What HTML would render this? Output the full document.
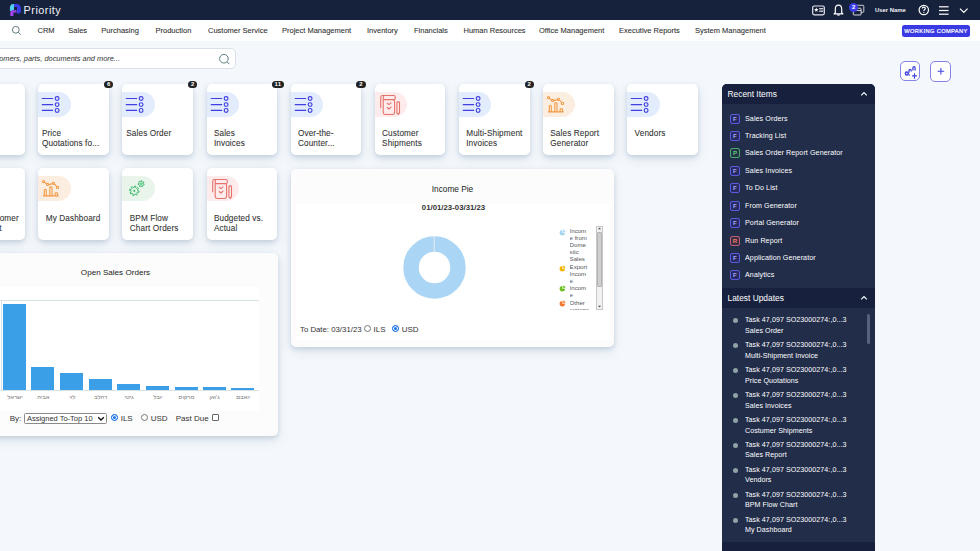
<!DOCTYPE html>
<html><head><meta charset="utf-8">
<style>
*{box-sizing:border-box;margin:0;padding:0}
html,body{width:980px;height:551px;overflow:hidden}
body{position:relative;background:#f4f8fc;font-family:"Liberation Sans",sans-serif;color:#333}
.abs{position:absolute}
#hdr{left:0;top:0;width:980px;height:20px;background:#16213c}
#nav{left:0;top:20px;width:980px;height:21px;background:#fff}
.nv{position:absolute;top:26px;font-size:7.5px;color:#303030;-webkit-text-stroke:0.08px #303030;white-space:nowrap;line-height:10px}
#search{left:-60px;top:48px;width:295.5px;height:20.5px;background:#fff;border:1px solid #d9e0e7;border-radius:5px}
.tile{position:absolute;width:70.8px;height:71px;background:#fff;border-radius:5px;box-shadow:0 2px 5px rgba(60,90,130,.2),0 5px 12px rgba(60,90,130,.1)}
.pill{position:absolute;left:0;top:8px;width:32.5px;height:25px;border-radius:0 12.5px 12.5px 0}
.pb{background:#e2ecfc}.po{background:#fcede1}.pr{background:#fdeceb}.pg{background:#e9f5eb}
.tt{position:absolute;left:7.4px;top:45.3px;font-size:8.2px;line-height:10px;color:#333;-webkit-text-stroke:0.08px #333;letter-spacing:0.12px;white-space:nowrap}
.badge{position:absolute;top:-2.6px;left:65.8px;min-width:9.2px;height:6.9px;border-radius:3.5px;background:#222;color:#fff;font-size:6px;font-weight:bold;line-height:7px;text-align:center;padding:0}
.card{position:absolute;background:#fcfcfc;border-radius:5px;box-shadow:0 2px 5px rgba(60,90,130,.2),0 5px 12px rgba(60,90,130,.1)}
#panel{left:722px;top:84px;width:153px;height:470px;background:#222d4a;border-radius:5px 5px 0 0;overflow:hidden}
.ph{position:absolute;left:0;width:153px;height:20px;background:#17213e;color:#fff;font-size:8.4px;line-height:20.8px;padding-left:5.5px}
.ri{position:absolute;left:8px;height:10px;font-size:7.1px;color:#fff;white-space:nowrap;letter-spacing:0.1px}
.ri i{position:absolute;left:0;top:0;width:10px;height:10px;border:0.9px solid #5b5be2;border-radius:2px;background:#262a5e;font-style:normal;font-weight:bold;font-size:6px;line-height:8.4px;text-align:center;color:#a8a8ff}
.ri span{position:absolute;left:15px;top:0;line-height:10px}
.lu{position:absolute;left:10px;font-size:7.1px;color:#fff;white-space:nowrap;line-height:10.5px;letter-spacing:0.06px}
.lu:before{content:"";position:absolute;left:0.5px;top:3.2px;width:5px;height:5px;border-radius:50%;background:#8ea3a6}
.lu span{position:absolute;left:13px;top:0}
.ri i.ip{border-color:#4aa86a;background:#24364a;color:#5cc872}
.ri i.ir{border-color:#b9606e;background:#3a2e48;color:#f07a5c}
.hb{font-size:5.8px;color:#777;text-align:center;line-height:8px;white-space:nowrap}
.ft{font-size:8px;color:#333;line-height:9px;white-space:nowrap}
.rad{width:7px;height:7px;border:1px solid #767676;border-radius:50%;background:#fff}
.rad.on{border:1.6px solid #1a73e8;background:#1a73e8;box-shadow:inset 0 0 0 1px #fff}
.lg{font-size:6.1px;line-height:7.2px;color:#555;white-space:nowrap}
.btn{position:absolute;top:61px;width:20.5px;height:20.5px;border:1px solid #8383ea;border-radius:5px;background:#fff}
</style></head><body>

<div id="hdr" class="abs">
  <svg class="abs" style="left:0;top:0" width="24" height="20" viewBox="0 0 24 20">
    <path d="M14 4H13.2C11.2 4 9.9 5.6 9.9 7.6V11.3L14 10Z" fill="#4fcdf2"/>
    <path d="M14.1 3.9H16.8C19.1 3.9 20.8 5.7 20.8 8V11.6C20.8 12.7 20 13.6 18.9 13.6H17V7H14.1Z" fill="#3b3bf2"/>
    <path d="M10.3 16V12.9C10.3 11.4 11.5 10.3 13 10.3H16.6V12.6H13.4V16Z" fill="#a544f4"/>
  </svg>
  <div class="abs" style="left:23.6px;top:3.2px;font-size:10.8px;color:#f4f4f8;line-height:14px;letter-spacing:0.5px">Priority</div>

  <!-- contact card icon -->
  <svg class="abs" style="left:812px;top:5px" width="13" height="11" viewBox="0 0 13 11">
    <rect x="0.7" y="1" width="11.6" height="8.8" rx="1.5" fill="none" stroke="#e8e8ee" stroke-width="1.2"/>
    <path d="M4.30 2.60 L4.89 4.09 L6.49 4.19 L5.25 5.21 L5.65 6.76 L4.30 5.90 L2.95 6.76 L3.35 5.21 L2.11 4.19 L3.71 4.09Z" fill="#fff"/><rect x="7.2" y="3.2" width="4" height="1.1" fill="#fff"/><rect x="7.2" y="5.6" width="4" height="1.1" fill="#fff"/>
  </svg>
  <!-- bell -->
  <svg class="abs" style="left:833px;top:4px" width="11" height="12" viewBox="0 0 11 12">
    <path d="M2.3 8.8 L2.3 5.2 Q2.3 1.2 5.5 1.2 Q8.7 1.2 8.7 5.2 L8.7 8.8 L9.9 9.9 L1.1 9.9 Z" fill="none" stroke="#fff" stroke-width="1.2" stroke-linejoin="round"/>
    <path d="M4.3 10.6 Q5.5 11.8 6.7 10.6" fill="none" stroke="#fff" stroke-width="1.1"/>
  </svg>
  <!-- windows -->
  <svg class="abs" style="left:852px;top:4px" width="13" height="12" viewBox="0 0 13 12">
    <rect x="4" y="1.3" width="7.8" height="7" rx="0.8" fill="none" stroke="#ddd" stroke-width="0.9"/>
    <rect x="1.3" y="4.2" width="7.8" height="6.8" rx="0.8" fill="#16213c" stroke="#eee" stroke-width="0.9"/>
    <rect x="1.3" y="6" width="7.8" height="0.8" fill="#eee"/>
  </svg>
  <div class="abs" style="left:849.2px;top:3.3px;width:9px;height:9px;border-radius:50%;background:#3b3be6;color:#fff;font-size:6px;font-weight:bold;line-height:9px;text-align:center">2</div>
  <div class="abs" style="left:875px;top:6px;font-size:5.9px;font-weight:bold;color:#f2f2f6;line-height:8px">User Name</div>
  <!-- help -->
  <svg class="abs" style="left:918px;top:4px" width="12" height="12" viewBox="0 0 12 12">
    <circle cx="5.8" cy="6" r="4.7" fill="none" stroke="#fff" stroke-width="1.2"/>
    <path d="M4.3 4.6 Q4.3 3.1 5.8 3.1 Q7.3 3.1 7.3 4.5 Q7.3 5.4 6.3 5.9 Q5.8 6.2 5.8 7.1" fill="none" stroke="#fff" stroke-width="1.2"/>
    <circle cx="5.8" cy="8.4" r="0.6" fill="#fff"/>
  </svg>
  <!-- hamburger -->
  <svg class="abs" style="left:938px;top:5px" width="12" height="11" viewBox="0 0 12 11">
    <rect x="1" y="1.2" width="9.6" height="1.2" fill="#fff"/><rect x="1" y="4.9" width="9.6" height="1.2" fill="#fff"/><rect x="1" y="8.6" width="9.6" height="1.2" fill="#fff"/>
  </svg>
  <!-- chevron -->
  <svg class="abs" style="left:958px;top:6px" width="11" height="9" viewBox="0 0 11 9">
    <path d="M2 2.6 L5.8 6.4 L9.6 2.6" fill="none" stroke="#fff" stroke-width="1.2"/>
  </svg>
</div>

<div id="nav" class="abs">
  <svg class="abs" style="left:11px;top:5px" width="11" height="11" viewBox="0 0 11 11">
    <circle cx="4.8" cy="4.8" r="3.4" fill="none" stroke="#5f7b80" stroke-width="1"/>
    <path d="M7.3 7.3 L9.6 9.6" stroke="#5f7b80" stroke-width="1"/>
  </svg>
</div>
<div class="nv" style="left:37.5px">CRM</div>
<div class="nv" style="left:68.3px">Sales</div>
<div class="nv" style="left:101.3px">Purchasing</div>
<div class="nv" style="left:155.5px">Production</div>
<div class="nv" style="left:208px">Customer Service</div>
<div class="nv" style="left:282px">Project Management</div>
<div class="nv" style="left:367px">Inventory</div>
<div class="nv" style="left:414px">Financials</div>
<div class="nv" style="left:463.5px">Human Resources</div>
<div class="nv" style="left:539px">Office Management</div>
<div class="nv" style="left:619px">Executive Reports</div>
<div class="nv" style="left:695px">System Management</div>
<div class="abs" style="left:902px;top:24.5px;width:68px;height:12.3px;background:#3535df;border-radius:2.5px;color:#fff;font-size:5.7px;font-weight:normal;-webkit-text-stroke:0.22px #fff;line-height:12.3px;text-align:center;letter-spacing:0.38px;background:#3a3ae4">WORKING COMPANY</div>

<!-- search -->
<div id="search" class="abs"></div>
<div class="abs" style="left:-2px;top:54px;width:122px;text-align:right;font-size:7.4px;font-style:italic;color:#333;line-height:10px;white-space:nowrap;overflow:visible;display:flex;justify-content:flex-end">omers, parts, documents and more...</div>
<svg class="abs" style="left:218px;top:53px" width="13" height="13" viewBox="0 0 13 13">
  <circle cx="5.9" cy="5.7" r="4.3" fill="none" stroke="#5f7b80" stroke-width="1"/>
  <path d="M9 8.8 L11.4 11.2" stroke="#5f7b80" stroke-width="1"/>
</svg>

<!-- action buttons -->
<div class="btn" style="left:900.3px;width:19.5px;height:20px">
  <svg class="abs" style="left:0;top:0" width="19" height="19" viewBox="0 0 19 19">
    <circle cx="5.8" cy="11.5" r="1.45" fill="none" stroke="#4343df" stroke-width="1.5"/>
    <circle cx="8.4" cy="13.1" r="0.75" fill="#4343df"/>
    <path d="M8 10.8V8.6Q8 7.3 9.1 7.3Q10.2 7.3 10.2 8.6V9.6M11.9 8.4V6Q11.9 4.7 13 4.7Q14.1 4.7 14.1 6V8.4" fill="none" stroke="#4343df" stroke-width="1.3"/>
    <path d="M11 13.9H16M13.5 11.2V16.7" stroke="#4343df" stroke-width="1.15"/>
  </svg>
</div>
<div class="btn" style="left:930.3px">
  <svg class="abs" style="left:0;top:0" width="19" height="19" viewBox="0 0 19 19">
    <path d="M6.6 9.3 L13.2 9.3 M9.9 6 L9.9 12.6" stroke="#4343df" stroke-width="1.1"/>
  </svg>
</div>

<!-- TILES ROW 1 -->
<div class="tile" style="left:-45.8px;top:84px"></div>

<div class="tile" style="left:38.3px;top:84px"><div class="pill pb"></div>
  <svg class="abs" style="left:0;top:0" width="34" height="34" viewBox="0 0 34 34"><g fill="none" stroke="#3f3fe2" stroke-width="1.15"><path d="M3.8 14.5H15.1M3.8 20.6H15.1M3.8 26.4H15.1"/><circle cx="19.1" cy="14.5" r="1.9"/><circle cx="19.1" cy="20.6" r="1.9"/><circle cx="19.1" cy="26.4" r="1.9"/></g></svg>
  <div class="tt" style="left:3.6px">Price<br>Quotations fo...</div><div class="badge">6</div></div>

<div class="tile" style="left:122.4px;top:84px"><div class="pill pb"></div>
  <svg class="abs" style="left:0;top:0" width="34" height="34" viewBox="0 0 34 34"><g fill="none" stroke="#3f3fe2" stroke-width="1.15"><path d="M3.8 14.5H15.1M3.8 20.6H15.1M3.8 26.4H15.1"/><circle cx="19.1" cy="14.5" r="1.9"/><circle cx="19.1" cy="20.6" r="1.9"/><circle cx="19.1" cy="26.4" r="1.9"/></g></svg>
  <div class="tt" style="left:3.9px">Sales Order</div><div class="badge">2</div></div>

<div class="tile" style="left:206.5px;top:84px"><div class="pill pb"></div>
  <svg class="abs" style="left:0;top:0" width="34" height="34" viewBox="0 0 34 34"><g fill="none" stroke="#3f3fe2" stroke-width="1.15"><path d="M3.8 14.5H15.1M3.8 20.6H15.1M3.8 26.4H15.1"/><circle cx="19.1" cy="14.5" r="1.9"/><circle cx="19.1" cy="20.6" r="1.9"/><circle cx="19.1" cy="26.4" r="1.9"/></g></svg>
  <div class="tt">Sales<br>Invoices</div><div class="badge" style="width:11.3px;letter-spacing:0.3px">11</div></div>

<div class="tile" style="left:290.6px;top:84px"><div class="pill pb"></div>
  <svg class="abs" style="left:0;top:0" width="34" height="34" viewBox="0 0 34 34"><g fill="none" stroke="#3f3fe2" stroke-width="1.15"><path d="M3.8 14.5H15.1M3.8 20.6H15.1M3.8 26.4H15.1"/><circle cx="19.1" cy="14.5" r="1.9"/><circle cx="19.1" cy="20.6" r="1.9"/><circle cx="19.1" cy="26.4" r="1.9"/></g></svg>
  <div class="tt">Over-the-<br>Counter...</div><div class="badge">2</div></div>

<div class="tile" style="left:374.7px;top:84px"><div class="pill pr"></div>
  <svg class="abs" style="left:0;top:0" width="34" height="34" viewBox="0 0 34 34"><g fill="none" stroke="#e5716b" stroke-width="1.1" stroke-linecap="round" stroke-linejoin="round"><path d="M5.7 23.8V13.4Q5.7 11.5 7.6 11.5H18.6Q20.4 11.5 20.4 13.4Q20.4 15.4 18.8 15.6"/><path d="M8.2 15.6H17.8Q19.6 15.6 19.6 17.4V28.6Q19.6 30.5 17.7 30.5H10.1Q8.2 30.5 8.2 28.6V13.4Q8.2 11.5 9.8 11.5"/><path d="M12.2 19.2L13.9 20.7L16 18.8M12.2 23.5L13.9 25L16 23.1"/><path d="M21.9 18.7Q21.9 17.9 23.2 17.9Q24.5 17.9 24.5 18.7V28.8L23.2 30.3L21.9 28.8Z"/></g></svg>
  <div class="tt">Customer<br>Shipments</div></div>

<div class="tile" style="left:458.8px;top:84px"><div class="pill pb"></div>
  <svg class="abs" style="left:0;top:0" width="34" height="34" viewBox="0 0 34 34"><g fill="none" stroke="#3f3fe2" stroke-width="1.15"><path d="M3.8 14.5H15.1M3.8 20.6H15.1M3.8 26.4H15.1"/><circle cx="19.1" cy="14.5" r="1.9"/><circle cx="19.1" cy="20.6" r="1.9"/><circle cx="19.1" cy="26.4" r="1.9"/></g></svg>
  <div class="tt">Multi-Shipment<br>Invoices</div><div class="badge">2</div></div>

<div class="tile" style="left:542.9px;top:84px"><div class="pill po"></div>
  <svg class="abs" style="left:0;top:0" width="34" height="34" viewBox="0 0 34 34"><g fill="none" stroke="#f39a44" stroke-width="1.1" stroke-linejoin="round"><path d="M6.3 14.2L8.8 15.9M10.5 16.7L14.3 15.6M16.3 15.9L18.7 18.5"/><circle cx="5.5" cy="13.6" r="1.05"/><circle cx="9.6" cy="16.4" r="1.05"/><circle cx="15.4" cy="15.3" r="1.05"/><circle cx="19.5" cy="19.4" r="1.15"/><path d="M6.3 27.8V22.3Q6.3 21.3 7.3 21.3Q8.3 21.3 8.3 22.3V27.8M11.8 27.8V19.5Q11.8 18.5 12.9 18.5Q14 18.5 14 19.5V27.8M17.1 27.8V25.5Q17.1 24.5 18.3 24.5Q19.5 24.5 19.5 25.5V27.8M5 27.9H20.6"/></g></svg>
  <div class="tt">Sales Report<br>Generator</div></div>

<div class="tile" style="left:627.2px;top:84px"><div class="pill pb"></div>
  <svg class="abs" style="left:0;top:0" width="34" height="34" viewBox="0 0 34 34"><g fill="none" stroke="#3f3fe2" stroke-width="1.15"><path d="M3.8 14.5H15.1M3.8 20.6H15.1M3.8 26.4H15.1"/><circle cx="19.1" cy="14.5" r="1.9"/><circle cx="19.1" cy="20.6" r="1.9"/><circle cx="19.1" cy="26.4" r="1.9"/></g></svg>
  <div class="tt">Vendors</div></div>

<!-- TILES ROW 2 -->
<div class="tile" style="left:-45.8px;top:168.3px;height:71.7px"><div class="tt" style="left:auto;right:6.2px;text-align:right">Top Customer</div><div class="tt" style="left:auto;right:23.4px;top:55.3px;text-align:right">Shipment</div></div>

<div class="tile" style="left:38.3px;top:168.3px;height:71.7px"><div class="pill po"></div>
  <svg class="abs" style="left:0;top:0" width="34" height="34" viewBox="0 0 34 34"><g fill="none" stroke="#f39a44" stroke-width="1.1" stroke-linejoin="round"><path d="M6.3 14.2L8.8 15.9M10.5 16.7L14.3 15.6M16.3 15.9L18.7 18.5"/><circle cx="5.5" cy="13.6" r="1.05"/><circle cx="9.6" cy="16.4" r="1.05"/><circle cx="15.4" cy="15.3" r="1.05"/><circle cx="19.5" cy="19.4" r="1.15"/><path d="M6.3 27.8V22.3Q6.3 21.3 7.3 21.3Q8.3 21.3 8.3 22.3V27.8M11.8 27.8V19.5Q11.8 18.5 12.9 18.5Q14 18.5 14 19.5V27.8M17.1 27.8V25.5Q17.1 24.5 18.3 24.5Q19.5 24.5 19.5 25.5V27.8M5 27.9H20.6"/></g></svg>
  <div class="tt">My Dashboard</div></div>

<div class="tile" style="left:122.4px;top:168.3px;height:71.7px"><div class="pill pg"></div>
  <svg class="abs" style="left:0;top:0" width="34" height="34" viewBox="0 0 34 34"><g fill="none" stroke="#3bb86b" stroke-width="0.95" stroke-linejoin="round"><path d="M12.28 19.40 L12.65 18.01 L13.84 18.26 L13.64 19.68 L14.69 20.38 L15.93 19.66 L16.61 20.68 L15.46 21.54 L15.70 22.78 L17.09 23.15 L16.84 24.34 L15.42 24.14 L14.72 25.19 L15.44 26.43 L14.42 27.11 L13.56 25.96 L12.32 26.20 L11.95 27.59 L10.76 27.34 L10.96 25.92 L9.91 25.22 L8.67 25.94 L7.99 24.92 L9.14 24.06 L8.90 22.82 L7.51 22.45 L7.76 21.26 L9.18 21.46 L9.88 20.41 L9.16 19.17 L10.18 18.49 L11.04 19.64Z"/><path d="M18.80 13.62 L18.96 12.70 L19.85 12.79 L19.82 13.72 L20.62 14.21 L21.43 13.76 L21.92 14.52 L21.18 15.07 L21.29 16.00 L22.15 16.35 L21.86 17.20 L20.96 16.97 L20.31 17.63 L20.57 18.53 L19.72 18.84 L19.35 17.99 L18.42 17.89 L17.88 18.65 L17.12 18.18 L17.55 17.36 L17.04 16.58 L16.11 16.63 L16.00 15.73 L16.91 15.56 L17.21 14.67 L16.59 13.98 L17.22 13.34 L17.93 13.94Z"/><circle cx="19.1" cy="15.8" r="0.8"/></g><circle cx="12.3" cy="22.8" r="1.1" fill="#3bb86b"/></svg>
  <div class="tt">BPM Flow<br>Chart Orders</div></div>

<div class="tile" style="left:206.5px;top:168.3px;height:71.7px"><div class="pill pr"></div>
  <svg class="abs" style="left:0;top:0" width="34" height="34" viewBox="0 0 34 34"><g fill="none" stroke="#e5716b" stroke-width="1.1" stroke-linecap="round" stroke-linejoin="round"><path d="M5.7 23.8V13.4Q5.7 11.5 7.6 11.5H18.6Q20.4 11.5 20.4 13.4Q20.4 15.4 18.8 15.6"/><path d="M8.2 15.6H17.8Q19.6 15.6 19.6 17.4V28.6Q19.6 30.5 17.7 30.5H10.1Q8.2 30.5 8.2 28.6V13.4Q8.2 11.5 9.8 11.5"/><path d="M12.2 19.2L13.9 20.7L16 18.8M12.2 23.5L13.9 25L16 23.1"/><path d="M21.9 18.7Q21.9 17.9 23.2 17.9Q24.5 17.9 24.5 18.7V28.8L23.2 30.3L21.9 28.8Z"/></g></svg>
  <div class="tt">Budgeted vs.<br>Actual</div></div>

<!-- OPEN SALES ORDERS -->
<div class="card" style="left:-60px;top:253px;width:337.5px;height:183px">
  <div class="abs" style="left:0;top:0;width:337px;height:34px;text-align:center;padding-left:14px;font-size:8.1px;line-height:10px;padding-top:15px;color:#222">Open Sales Orders</div>
  <div class="abs" style="left:0px;top:33.5px;width:318.5px;height:124.5px;background:#fff"></div>
  <div class="abs" style="left:60px;top:47px;width:258.5px;height:1px;background:#d8e2e6"></div>
  <div class="abs" style="left:60.5px;top:47px;width:1px;height:90.5px;background:#d8e2e6"></div>
  <div class="abs" style="left:60px;top:137px;width:258.5px;height:1px;background:#d8e2e6"></div>
  <div class="abs" style="left:63.0px;top:51.0px;width:23px;height:86.0px;background:#3a9fe6"></div>
  <div class="abs hb" style="left:58.5px;top:139.8px;width:33px">ישראל</div>
  <div class="abs" style="left:91.4px;top:113.9px;width:23px;height:23.1px;background:#3a9fe6"></div>
  <div class="abs hb" style="left:86.9px;top:139.8px;width:33px">אביה</div>
  <div class="abs" style="left:120.4px;top:120.0px;width:23px;height:17.0px;background:#3a9fe6"></div>
  <div class="abs hb" style="left:115.9px;top:139.8px;width:33px">לוי</div>
  <div class="abs" style="left:148.7px;top:126.2px;width:23px;height:10.8px;background:#3a9fe6"></div>
  <div class="abs hb" style="left:144.2px;top:139.8px;width:33px">רחלב</div>
  <div class="abs" style="left:177.1px;top:131.3px;width:23px;height:5.7px;background:#3a9fe6"></div>
  <div class="abs hb" style="left:172.6px;top:139.8px;width:33px">גיטי</div>
  <div class="abs" style="left:205.9px;top:133.4px;width:23px;height:3.6px;background:#3a9fe6"></div>
  <div class="abs hb" style="left:201.4px;top:139.8px;width:33px">יובל</div>
  <div class="abs" style="left:234.5px;top:134.0px;width:23px;height:3.0px;background:#3a9fe6"></div>
  <div class="abs hb" style="left:230.0px;top:139.8px;width:33px">מרקוס</div>
  <div class="abs" style="left:262.5px;top:134.0px;width:23px;height:3.0px;background:#3a9fe6"></div>
  <div class="abs hb" style="left:258.0px;top:139.8px;width:33px">ג'ואן</div>
  <div class="abs" style="left:291.2px;top:135.0px;width:23px;height:2.0px;background:#3a9fe6"></div>
  <div class="abs hb" style="left:286.7px;top:139.8px;width:33px">יואבם</div>
  <div class="abs ft" style="left:69.7px;top:161px">By:</div>
  <div class="abs" style="left:84.3px;top:160px;width:83px;height:10.6px;border:1px solid #8a8a8a;border-radius:1.5px;background:#fff"></div>
  <div class="abs ft" style="left:86.9px;top:161px;font-size:7.5px">Assigned To-Top 10</div>
  <svg class="abs" style="left:156.5px;top:162px" width="8" height="7" viewBox="0 0 8 7"><path d="M1.2 2.2L4 5L6.8 2.2" fill="none" stroke="#111" stroke-width="1.3"/></svg>
  <div class="abs rad on" style="left:170.7px;top:160.5px"></div>
  <div class="abs ft" style="left:180.7px;top:161px">ILS</div>
  <div class="abs rad" style="left:201px;top:160.5px"></div>
  <div class="abs ft" style="left:210.7px;top:161px">USD</div>
  <div class="abs ft" style="left:235.7px;top:161px">Past Due</div>
  <div class="abs" style="left:272px;top:160.60000000000002px;width:7.3px;height:7.1px;border:1px solid #666;border-radius:1px;background:#fff"></div>
</div>

<!-- INCOME PIE -->
<div class="card" style="left:290.5px;top:168.5px;width:323.6px;height:178px">
  <div class="abs" style="left:5.5px;top:35.2px;width:314px;height:136.5px;background:#fff"></div>
  <div class="abs" style="left:0;top:15px;width:324px;text-align:center;font-size:8.3px;line-height:10px;color:#222">Income Pie</div>
  <div class="abs" style="left:0;top:34px;width:324px;text-align:center;font-size:7.8px;font-weight:bold;line-height:10px;color:#333;padding-left:2px">01/01/23-03/31/23</div>
  <svg class="abs" style="left:112.4px;top:67.2px" width="63" height="63" viewBox="0 0 63 63"><circle cx="31.5" cy="31.5" r="23.5" fill="none" stroke="#aad5f4" stroke-width="15.5"/><path d="M31.2 0.5V16" stroke="#f6f2ea" stroke-width="0.8"/></svg>
  <svg class="abs" style="left:268.5px;top:60.30000000000001px" width="7" height="7" viewBox="0 0 7 7"><path d="M3.3 3.8V1.1A2.7 2.7 0 1 0 6 3.8Z" fill="#a8d4f3"/><path d="M3.9 3.2V0.6A2.6 2.6 0 0 1 6.5 3.2Z" fill="#a8d4f3" opacity=".8"/></svg>
  <svg class="abs" style="left:268.5px;top:96.30000000000001px" width="7" height="7" viewBox="0 0 7 7"><path d="M3.3 3.8V1.1A2.7 2.7 0 1 0 6 3.8Z" fill="#f6b400"/><path d="M3.9 3.2V0.6A2.6 2.6 0 0 1 6.5 3.2Z" fill="#f6b400" opacity=".8"/></svg>
  <svg class="abs" style="left:268.5px;top:116.60000000000002px" width="7" height="7" viewBox="0 0 7 7"><path d="M3.3 3.8V1.1A2.7 2.7 0 1 0 6 3.8Z" fill="#6cbf1f"/><path d="M3.9 3.2V0.6A2.6 2.6 0 0 1 6.5 3.2Z" fill="#6cbf1f" opacity=".8"/></svg>
  <svg class="abs" style="left:268.5px;top:131.5px" width="7" height="7" viewBox="0 0 7 7"><path d="M3.3 3.8V1.1A2.7 2.7 0 1 0 6 3.8Z" fill="#f4792b"/><path d="M3.9 3.2V0.6A2.6 2.6 0 0 1 6.5 3.2Z" fill="#f4792b" opacity=".8"/></svg>
  <div class="abs lg" style="left:279.1px;top:58.0px;height:83px;overflow:hidden">Incom<br>e from<br>Dome<br>stic<br>Sales<br>Export<br>Incom<br>e<br>Incom<br>e<br>Other<br>expens</div>
  <div class="abs" style="left:305.79999999999995px;top:57.0px;width:6.5px;height:84.2px;border:1px solid #c8c8c8;background:#f1f1f1"></div>
  <div class="abs" style="left:306.5px;top:63.69999999999999px;width:5px;height:54.5px;background:#cfcfcf;border:1px solid #b3b3b3;border-radius:1px"></div>
  <svg class="abs" style="left:306.5px;top:57.80000000000001px" width="5" height="5" viewBox="0 0 5 5"><path d="M1 3.3L2.5 1.5L4 3.3Z" fill="#505050"/></svg>
  <svg class="abs" style="left:306.5px;top:135.0px" width="5" height="5" viewBox="0 0 5 5"><path d="M1 1.7L2.5 3.5L4 1.7Z" fill="#505050"/></svg>
  <div class="abs ft" style="left:9.5px;top:156.5px;font-size:7.8px">To Date: 03/31/23</div>
  <div class="abs rad" style="left:73.69999999999999px;top:156.7px"></div>
  <div class="abs ft" style="left:83.10000000000002px;top:156.5px">ILS</div>
  <div class="abs rad on" style="left:101.69999999999999px;top:156.7px"></div>
  <div class="abs ft" style="left:111.19999999999999px;top:156.5px">USD</div>
</div>

<!-- RIGHT PANEL -->
<div id="panel" class="abs">
  <div class="ph" style="top:0">Recent Items</div>
  <div class="ph" style="top:203.6px">Latest Updates</div>
  <div class="ph" style="top:457.6px"></div>
  <div class="ri" style="top:29.60px"><i>F</i><span>Sales Orders</span></div>
  <div class="ri" style="top:47.02px"><i>F</i><span>Tracking List</span></div>
  <div class="ri" style="top:64.44px"><i class="ip">P</i><span>Sales Order Report Generator</span></div>
  <div class="ri" style="top:81.86px"><i>F</i><span>Sales Invoices</span></div>
  <div class="ri" style="top:99.28px"><i>F</i><span>To Do List</span></div>
  <div class="ri" style="top:116.70px"><i>F</i><span>From Generator</span></div>
  <div class="ri" style="top:134.12px"><i>F</i><span>Portal Generator</span></div>
  <div class="ri" style="top:151.54px"><i class="ir">R</i><span>Run Report</span></div>
  <div class="ri" style="top:168.96px"><i>F</i><span>Application Generator</span></div>
  <div class="ri" style="top:186.38px"><i>F</i><span>Analytics</span></div>
  <div class="lu" style="top:231.20px"><span>Task 47,097 SO23000274:,0...3<br>Sales Order</span></div>
  <div class="lu" style="top:256.15px"><span>Task 47,097 SO23000274:,0...3<br>Multi-Shipment Invoice</span></div>
  <div class="lu" style="top:281.10px"><span>Task 47,097 SO23000274:,0...3<br>Price Quotations</span></div>
  <div class="lu" style="top:306.05px"><span>Task 47,097 SO23000274:,0...3<br>Sales Invoices</span></div>
  <div class="lu" style="top:331.00px"><span>Task 47,097 SO23000274:,0...3<br>Costumer Shipments</span></div>
  <div class="lu" style="top:355.95px"><span>Task 47,097 SO23000274:,0...3<br>Sales Report</span></div>
  <div class="lu" style="top:380.90px"><span>Task 47,097 SO23000274:,0...3<br>Vendors</span></div>
  <div class="lu" style="top:405.85px"><span>Task 47,097 SO23000274:,0...3<br>BPM Flow Chart</span></div>
  <div class="lu" style="top:430.80px"><span>Task 47,097 SO23000274:,0...3<br>My Dashboard</span></div>
  <div class="abs" style="left:145px;top:229.5px;width:2.5px;height:30px;border-radius:1.5px;background:#56627c"></div>
  <svg class="abs" style="left:137px;top:6px" width="10" height="8" viewBox="0 0 10 8"><path d="M2.2 5.4L5 2.5L7.8 5.4" fill="none" stroke="#fff" stroke-width="1.1"/></svg>
  <svg class="abs" style="left:137px;top:209.6px" width="10" height="8" viewBox="0 0 10 8"><path d="M2.2 5.4L5 2.5L7.8 5.4" fill="none" stroke="#fff" stroke-width="1.1"/></svg>
</div>

</body></html>
